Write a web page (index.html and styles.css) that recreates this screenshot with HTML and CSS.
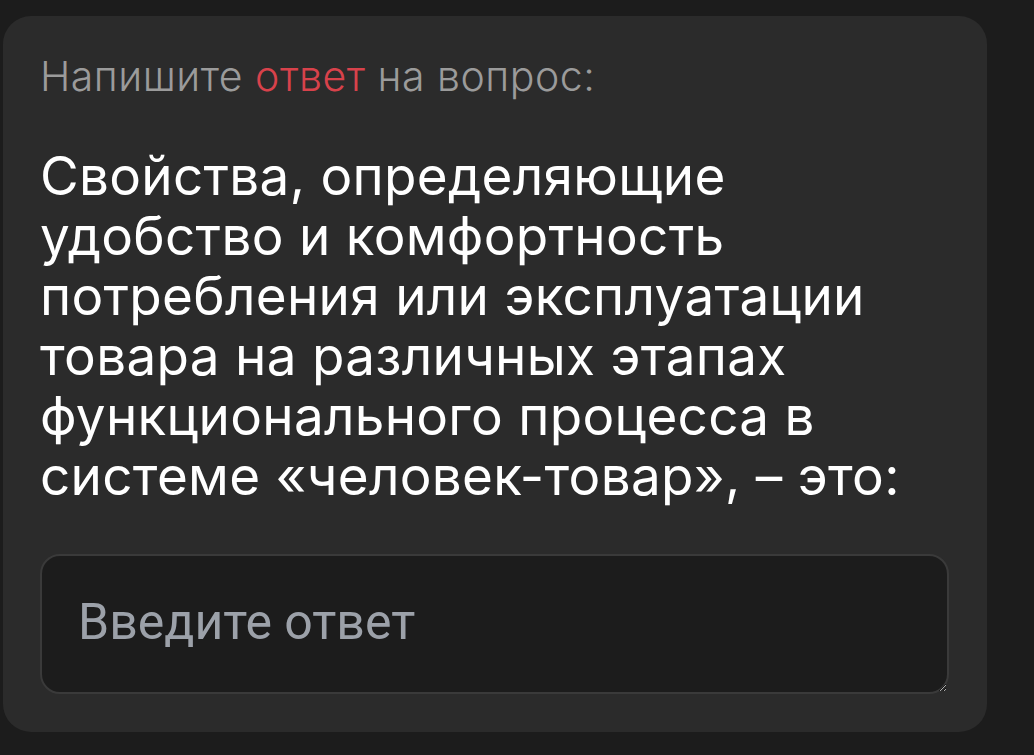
FILE: index.html
```html
<!DOCTYPE html>
<html lang="ru">
<head>
    <meta charset="UTF-8">
    <meta name="viewport" content="width=device-width, initial-scale=1.0">
    <title>Вопрос</title>
    <link rel="stylesheet" href="styles.css">
</head>
<body>
    <div class="question-card">
        <p class="task-label">Напишите <span class="accent">ответ</span> на вопрос:</p>

        <h2 class="question-text">Свойства, определяющие удобство и комфортность потребления или эксплуатации товара на различных этапах функционального процесса в системе «человек-товар», – это:</h2>

        <textarea class="answer-input" placeholder="Введите ответ"></textarea>
    </div>
</body>
</html>
```

FILE: styles.css
```css
/* Page */
body {
    margin: 0;
    padding: 16px 0 0 3px;
    background: #1c1c1c;
    font-family: Inter, sans-serif;
}

/* Question card */
.question-card {
    width: 984px;
    box-sizing: border-box;
    padding: 36px 38px 38px 37px;
    background: #2b2b2b;
    border-radius: 28px;
}

.task-label {
    margin: 0;
    font-size: 41px;
    font-weight: 300;
    letter-spacing: 0.5px;
    line-height: 48px;
    color: #9b9b9b;
}

.task-label .accent {
    color: #d8424b;
}

.question-text {
    margin: 46px 0 0;
    font-size: 53px;
    font-weight: 400;
    letter-spacing: 0.3px;
    line-height: 60px;
    color: #ffffff;
}

/* Answer field */
.answer-input {
    display: block;
    width: 100%;
    height: 140px;
    box-sizing: border-box;
    margin-top: 48px;
    padding: 37px 36px;
    background: #1c1c1c;
    border: 2px solid #3a3a3a;
    border-radius: 20px;
    font-family: Roboto, sans-serif;
    font-size: 50px;
    color: #e5e5e5;
    outline: none;
}

.answer-input::placeholder {
    color: #9ca1a9;
}
```
